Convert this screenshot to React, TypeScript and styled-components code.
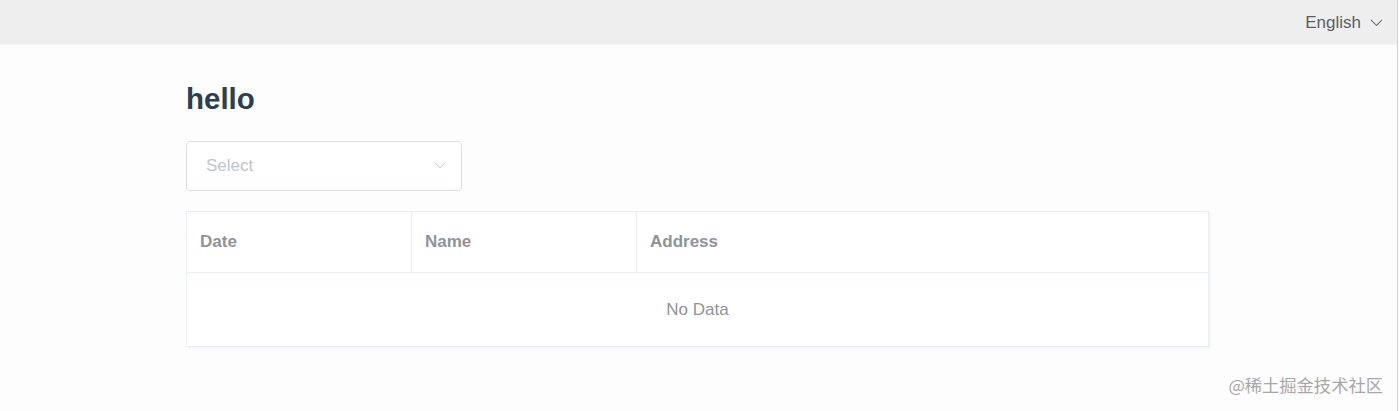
import React from "react";
import styled, { createGlobalStyle } from "styled-components";

const Global = createGlobalStyle`
  html, body { margin: 0; padding: 0; background: #fdfdfd; }
  body { font-family: "Liberation Sans", Arial, sans-serif; overflow: hidden; }
`;

const Page = styled.div`
  width: 1397px;
  height: 411px;
  border-right: 1px solid #d2d2d2;
  display: flex;
  flex-direction: column;
`;

const Header = styled.header`
  height: 44px;
  flex: none;
  background: #eeeeee;
  border-bottom: 1px solid #f4f4f4;
  display: flex;
  align-items: center;
  justify-content: flex-end;
  padding-right: 14px;
`;

const LangSwitch = styled.div`
  display: flex;
  align-items: center;
  gap: 9px;
  font-size: 17px;
  color: #5a5e66;
  cursor: pointer;
  padding-top: 1px;
`;

const Main = styled.main`
  flex: 1;
  padding: 37px 0 0 186px;
  display: flex;
  flex-direction: column;
  position: relative;
`;

const Title = styled.h1`
  margin: 0;
  font-size: 29.5px;
  font-weight: bold;
  color: #2c3e50;
  line-height: 34px;
`;

const SelectBox = styled.div`
  margin-top: 25px;
  width: 276px;
  height: 50px;
  box-sizing: border-box;
  border: 1px solid #dcdfe6;
  border-radius: 4px;
  background: #fff;
  display: flex;
  align-items: center;
  justify-content: space-between;
  padding: 0 15px 0 19px;
`;

const Placeholder = styled.span`
  font-size: 17px;
  color: #c0c4cc;
`;

const Table = styled.div`
  margin-top: 20px;
  width: 1023px;
  box-sizing: border-box;
  border: 1px solid #ebeef5;
  background: #fff;
  box-shadow: 1px 1px 2px rgba(0, 0, 0, 0.05);
`;

const HeadRow = styled.div`
  display: grid;
  grid-template-columns: 225px 225px 1fr;
  height: 60px;
  border-bottom: 1px solid #ebeef5;
`;

const HeadCell = styled.div<{ $last?: boolean }>`
  display: flex;
  align-items: center;
  padding-left: 13px;
  font-size: 17px;
  font-weight: bold;
  color: #909399;
  border-right: ${(p) => (p.$last ? "none" : "1px solid #ebeef5")};
`;

const Empty = styled.div`
  height: 73px;
  display: flex;
  align-items: center;
  justify-content: center;
  font-size: 17px;
  color: #909399;
`;

const Watermark = styled.div`
  position: absolute;
  right: 14px;
  bottom: 14px;
  font-size: 17.3px;
  color: #a8a8a8;
  font-family: "Noto Sans CJK SC", "Liberation Sans", sans-serif;
`;

const Chevron = ({ size = 13, color = "#5a5e66" }: { size?: number; color?: string }) => (
  <svg width={size} height={size * 0.6} viewBox="0 0 13 8" fill="none">
    <path d="M0.8 0.8 L6.5 6.6 L12.2 0.8" stroke={color} strokeWidth="1.1" />
  </svg>
);

export default function App() {
  return (
    <>
      <Global />
      <Page>
        <Header>
          <LangSwitch>
            English
            <Chevron size={13} color="#6f737a" />
          </LangSwitch>
        </Header>
        <Main>
          <Title>hello</Title>
          <SelectBox>
            <Placeholder>Select</Placeholder>
            <Chevron size={12} color="#c0c4cc" />
          </SelectBox>
          <Table>
            <HeadRow>
              <HeadCell>Date</HeadCell>
              <HeadCell>Name</HeadCell>
              <HeadCell $last>Address</HeadCell>
            </HeadRow>
            <Empty>No Data</Empty>
          </Table>
          <Watermark>@稀土掘金技术社区</Watermark>
        </Main>
      </Page>
    </>
  );
}
